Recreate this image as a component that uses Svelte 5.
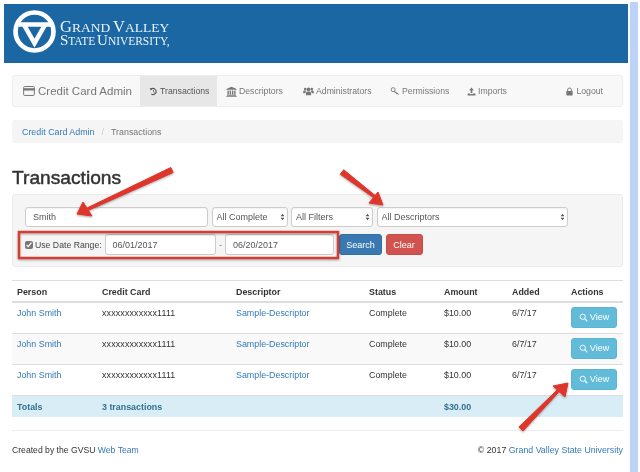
<script>
	const tabs = [
		{ name: 'Transactions', icon: 'history', width: 77, active: true },
		{ name: 'Descriptors', icon: 'bank', width: 77 },
		{ name: 'Administrators', icon: 'users', width: 87 },
		{ name: 'Permissions', icon: 'key', width: 77 },
		{ name: 'Imports', icon: 'upload', width: 60 }
	];

	const rows = [1, 2, 3].map(() => ({
		person: 'John Smith',
		card: 'xxxxxxxxxxxx1111',
		descriptor: 'Sample-Descriptor',
		status: 'Complete',
		amount: '$10.00',
		added: '6/7/17'
	}));
</script>

{#snippet icon(name)}
	<svg class="icon i-{name}" viewBox="0 0 12 12" aria-hidden="true">
		{#if name === 'history'}
			<path d="M2.6 3.2A4 4 0 1 1 3 9.2" fill="none" stroke="currentColor" stroke-width="1.4" />
			<path d="M1 1.6 4.6 1.8 2.4 4.8Z" fill="currentColor" />
			<path d="M6 4v2.4l1.6 1" fill="none" stroke="currentColor" stroke-width="1" />
		{:else if name === 'bank'}
			<path d="M6 .8 11.6 3.4V4.2H.4V3.4Z" fill="currentColor" />
			<path d="M1.6 4.8h1.5v4.4H1.6ZM4 4.8h1.5v4.4H4ZM6.5 4.8H8v4.4H6.5ZM8.9 4.8h1.5v4.4H8.9ZM1 9.6h10v.9H1ZM.3 10.8h11.4v.9H.3Z" fill="currentColor" />
		{:else if name === 'users'}
			<circle cx="6" cy="3.6" r="2" fill="currentColor" />
			<circle cx="2.4" cy="3.4" r="1.4" fill="currentColor" />
			<circle cx="9.6" cy="3.4" r="1.4" fill="currentColor" />
			<path d="M3.2 10V7.6C3.2 6.4 4.4 6 6 6s2.8.4 2.8 1.6V10ZM.2 8V6.2C.2 5.4 1 5 2.4 5c.4 0 .7 0 1 .1L2.4 8ZM11.8 8V6.2c0-.8-.8-1.2-2.2-1.2-.4 0-.7 0-1 .1L9.6 8Z" fill="currentColor" />
		{:else if name === 'key'}
			<circle cx="3.8" cy="4.4" r="2.4" fill="none" stroke="currentColor" stroke-width="1.1" />
			<path d="M5.5 6.1 10.8 9.6 10 10.4 9 9.7 8.3 10.3 7.6 9.2 4.7 7Z" fill="currentColor" />
		{:else if name === 'upload'}
			<path d="M6 .8 9 4.2H7.2V8H4.8V4.2H3Z" fill="currentColor" />
			<path d="M.8 8.8H4v.6h4v-.6h3.2v2.4H.8Z" fill="currentColor" />
		{:else if name === 'lock'}
			<path d="M3.5 5.5V3.8a2.5 2.5 0 0 1 5 0v1.7" fill="none" stroke="currentColor" stroke-width="1.3" />
			<rect x="1.8" y="5.2" width="8.4" height="6" rx=".8" fill="currentColor" />
		{:else if name === 'search'}
			<circle cx="5" cy="5" r="3.5" fill="none" stroke="currentColor" stroke-width="1.2" />
			<path d="M7.6 7.6 11 11" stroke="currentColor" stroke-width="1.5" fill="none" />
		{/if}
	</svg>
{/snippet}

{#snippet chevrons()}
	<svg class="chevrons" viewBox="0 0 6 10" aria-hidden="true">
		<path d="M3 .8 5.4 4H.6ZM3 9.2.6 6h4.8Z" fill="#555" />
	</svg>
{/snippet}

<div class="shot">
	<div class="page">
		<header class="banner">
			<svg class="seal" viewBox="0 0 46 46" aria-hidden="true">
				<circle cx="23" cy="23" r="20.3" fill="none" stroke="#fff" stroke-width="5" />
				<path d="M6 15.5H43" stroke="#fff" stroke-width="4.6" />
				<path d="M11.5 15.5 23 35.5 34.5 15.5" fill="none" stroke="#fff" stroke-width="4.8" />
			</svg>
			<div class="wordmark">
				<div class="line-one"><span class="cap">G</span>RAND <span class="cap">V</span>ALLEY</div>
				<div class="line-two"><span class="cap">S</span>TATE <span class="cap">U</span>NIVERSITY,</div>
			</div>
		</header>

		<main class="container">
			<nav class="navbar">
				<span class="brand">
					<svg class="card-icon" viewBox="0 0 13 11" aria-hidden="true">
						<rect x=".6" y=".6" width="11.8" height="9.8" rx="1" fill="none" stroke="currentColor" stroke-width="1.1" />
						<rect x=".6" y="2.4" width="11.8" height="2.6" fill="currentColor" />
					</svg>
					Credit Card Admin
				</span>
				{#each tabs as tab}
					<span class="tab" class:active={tab.active} style="width: {tab.width}px">
						{@render icon(tab.icon)}{tab.name}
					</span>
				{/each}
				<span class="tab logout">{@render icon('lock')}Logout</span>
			</nav>

			<div class="breadcrumb">
				<a href="#top">Credit Card Admin</a>
				<span class="sep">/</span>
				<span>Transactions</span>
			</div>

			<h1>Transactions</h1>

			<form class="well" on:submit|preventDefault>
				<div class="row">
					<input class="name" type="text" value="Smith" />
					<span class="select w-complete"><select><option>All Complete</option></select>{@render chevrons()}</span>
					<span class="select w-filters"><select><option>All Filters</option></select>{@render chevrons()}</span>
					<span class="select w-descriptors"><select><option>All Descriptors</option></select>{@render chevrons()}</span>
				</div>
				<div class="row second">
					<label class="range">
						<input type="checkbox" checked />
						Use Date Range:
					</label>
					<input class="date first" type="text" value="06/01/2017" />
					<span class="dash">-</span>
					<input class="date last" type="text" value="06/20/2017" />
					<button class="btn search" type="button">Search</button>
					<button class="btn clear" type="button">Clear</button>
				</div>
			</form>

			<table>
				<colgroup>
					<col style="width: 85px" />
					<col style="width: 134px" />
					<col style="width: 133px" />
					<col style="width: 75px" />
					<col style="width: 68px" />
					<col style="width: 59px" />
					<col style="width: 57px" />
				</colgroup>
				<thead>
					<tr>
						<th>Person</th>
						<th>Credit Card</th>
						<th>Descriptor</th>
						<th>Status</th>
						<th>Amount</th>
						<th>Added</th>
						<th>Actions</th>
					</tr>
				</thead>
				<tbody>
					{#each rows as row}
						<tr>
							<td><a href="#top">{row.person}</a></td>
							<td class="card">{row.card}</td>
							<td><a href="#top">{row.descriptor}</a></td>
							<td>{row.status}</td>
							<td>{row.amount}</td>
							<td>{row.added}</td>
							<td class="action"><button class="btn view" type="button">{@render icon('search')}View</button></td>
						</tr>
					{/each}
				</tbody>
				<tfoot>
					<tr>
						<td>Totals</td>
						<td>3 transactions</td>
						<td></td>
						<td></td>
						<td>$30.00</td>
						<td></td>
						<td></td>
					</tr>
				</tfoot>
			</table>

			<footer>
				<span class="made">Created by the GVSU <a href="#top">Web Team</a></span>
				<span>© 2017 <a href="#top">Grand Valley State University</a></span>
			</footer>
		</main>

		<!-- annotations drawn on top of the screenshot -->
		<svg class="marks" viewBox="0 0 630 472" aria-hidden="true">
			<rect x="19" y="232" width="319" height="26" fill="none" stroke="#d93c30" stroke-width="2.4" />
			<g fill="#e0352b" stroke="#e0352b" stroke-linejoin="round" stroke-width="1">
				<path d="M173.2 172.5 170.8 167.5 87.5 207.8 88.5 210.2Z" />
				<path d="M77 214 83 202 92 216Z" />
				<path d="M340.3 174.2 343.7 169.8 375.8 196 374.2 198Z" />
				<path d="M383 205 378 192 369 203Z" />
				<path d="M523 431 519 427 557.1 390.1 558.9 391.9Z" />
				<path d="M568 383 553 386 565 397Z" />
			</g>
		</svg>
	</div>
	<div class="strip"></div>
</div>

<style>
	:global(body) {
		margin: 0;
		background: #fff;
	}

	.shot {
		display: flex;
		width: 640px;
		height: 472px;
		overflow: hidden;
		font-family: 'Liberation Sans', Arial, sans-serif;
		font-size: 8.9px;
		color: #333;
	}

	.page {
		position: relative;
		width: 630px;
		padding-top: 4px;
		box-sizing: border-box;
		filter: blur(0.45px);
	}

	.strip {
		width: 8px;
		margin-top: 2px;
		background: #bcd2f7;
	}

	.banner {
		display: flex;
		align-items: center;
		gap: 4px;
		height: 59px;
		margin: 0 2px 0 4px;
		padding-left: 9px;
		box-sizing: border-box;
		background: #1a67a3;
	}

	.seal {
		width: 43px;
		height: 43px;
		margin-top: -4px;
	}

	.wordmark {
		font-family: 'Liberation Serif', serif;
		color: #fff;
		opacity: 0.92;
	}

	.line-one {
		font-size: 13.5px;
		line-height: 13.5px;
		height: 13.5px;
		white-space: nowrap;
		word-spacing: -0.5px;
	}

	.line-one .cap {
		font-size: 16.5px;
	}

	.line-two {
		font-size: 11.5px;
		line-height: 13.5px;
		height: 13.5px;
		white-space: nowrap;
		letter-spacing: -0.05px;
		word-spacing: -1px;
	}

	.line-two .cap {
		font-size: 15px;
	}

	.container {
		margin: 0 7px 0 12px;
		padding-top: 12px;
	}

	a {
		color: #337ab7;
		text-decoration: none;
	}

	.navbar {
		display: flex;
		align-items: stretch;
		height: 32px;
		box-sizing: border-box;
		padding-left: 10px;
		background: #f8f8f8;
		border: 1px solid #eee;
		border-radius: 3px;
		color: #777;
	}

	.brand {
		display: flex;
		align-items: center;
		gap: 3px;
		width: 117px;
		font-size: 11.5px;
	}

	.card-icon {
		width: 12px;
		height: 10px;
	}

	.tab {
		display: flex;
		align-items: center;
		gap: 2px;
		box-sizing: border-box;
		padding-left: 9px;
		font-size: 8.7px;
		white-space: nowrap;
	}

	.tab.active {
		background: #e7e7e7;
		color: #555;
	}

	.logout {
		margin-left: auto;
		margin-right: 19px;
		padding-left: 0;
	}

	.icon {
		width: 9px;
		height: 9px;
		flex: none;
	}

	.i-bank,
	.i-users {
		width: 11px;
		height: 11px;
	}

	.i-key {
		width: 10px;
		height: 10px;
	}

	.breadcrumb {
		display: flex;
		align-items: center;
		gap: 7px;
		height: 23px;
		margin-top: 13px;
		padding-left: 10px;
		background: #f5f5f5;
		border-radius: 3px;
		color: #777;
	}

	.sep {
		color: #ccc;
	}

	h1 {
		margin: 22px 0 3px;
		font-size: 19.2px;
		line-height: 26px;
		font-weight: 400;
		-webkit-text-stroke: 0.5px #333;
	}

	.well {
		height: 73px;
		box-sizing: border-box;
		padding: 12px;
		background: #f5f5f5;
		border: 1px solid #ebebeb;
		border-radius: 3px;
		font-size: 9px;
	}

	.row {
		display: flex;
		align-items: center;
		gap: 3.5px;
		height: 20px;
	}

	.second {
		height: 21px;
		margin-top: 7px;
	}

	input[type='text'],
	select {
		height: 100%;
		box-sizing: border-box;
		border: 1px solid #ccc;
		border-radius: 3px;
		background: #fff;
		color: #555;
		font: inherit;
		padding: 0 7px;
		box-shadow: inset 0 1px 1px rgba(0, 0, 0, 0.05);
	}

	select {
		appearance: none;
		width: 100%;
		padding: 0 4px;
	}

	.name {
		width: 183px;
	}

	.select {
		position: relative;
		height: 100%;
		display: block;
	}

	.w-complete {
		width: 76px;
	}

	.w-filters {
		width: 82px;
	}

	.w-descriptors {
		width: 191px;
	}

	.chevrons {
		position: absolute;
		right: 3px;
		top: 6px;
		width: 5px;
		height: 8px;
	}

	.range {
		display: flex;
		align-items: center;
		gap: 2px;
		width: 76px;
		white-space: nowrap;
		color: #444;
		font-size: 8.7px;
	}

	.range input {
		width: 8px;
		height: 8px;
		margin: 0;
		accent-color: #777;
	}

	.date {
		flex: none;
	}

	.date.first {
		width: 111px;
	}

	.date.last {
		width: 109px;
		margin-right: 1.5px;
	}

	.dash {
		width: 2.5px;
		text-align: center;
		color: #777;
	}

	.btn {
		height: 21px;
		border: 1px solid transparent;
		border-radius: 3px;
		padding: 0;
		color: #fff;
		font: inherit;
	}

	.search {
		width: 43px;
		background: #3a78b2;
		border-color: #336fa6;
	}

	.clear {
		width: 37px;
		background: #d1534f;
		border-color: #cb4a45;
	}

	.view {
		display: flex;
		align-items: center;
		justify-content: center;
		gap: 2px;
		width: 46px;
		background: #62bbd9;
		border-color: #58b5d5;
		font-size: 9px;
	}

	table {
		width: 611px;
		margin-top: 13px;
		border-collapse: collapse;
		table-layout: fixed;
	}

	th,
	td {
		padding: 5px 5px 4px;
		text-align: left;
		vertical-align: top;
		line-height: 11px;
		border-top: 1px solid #ddd;
	}

	th {
		height: 20px;
		box-sizing: border-box;
		padding-top: 6px;
		padding-bottom: 3px;
	}

	thead th {
		border-bottom: 2px solid #ddd;
	}

	tbody td {
		height: 31px;
		box-sizing: border-box;
		white-space: nowrap;
	}

	tbody .card {
		letter-spacing: 0.15px;
	}

	tbody tr:nth-child(2) td {
		background: #f9f9f9;
	}

	td.action {
		padding: 4px 5px 0;
	}

	tfoot td {
		height: 21px;
		box-sizing: border-box;
		padding-top: 6px;
		background: #d9edf7;
		color: #31708f;
		font-weight: 700;
	}

	footer {
		display: flex;
		justify-content: space-between;
		margin-top: 13px;
		padding-top: 14px;
		border-top: 1px solid #eee;
		line-height: 11px;
		font-size: 8.8px;
	}

	.made {
		font-size: 8.65px;
	}

	.marks {
		position: absolute;
		top: 0;
		left: 0;
		width: 630px;
		height: 472px;
		pointer-events: none;
		filter: drop-shadow(0 1px 1px rgba(0, 0, 0, 0.35));
	}
</style>
